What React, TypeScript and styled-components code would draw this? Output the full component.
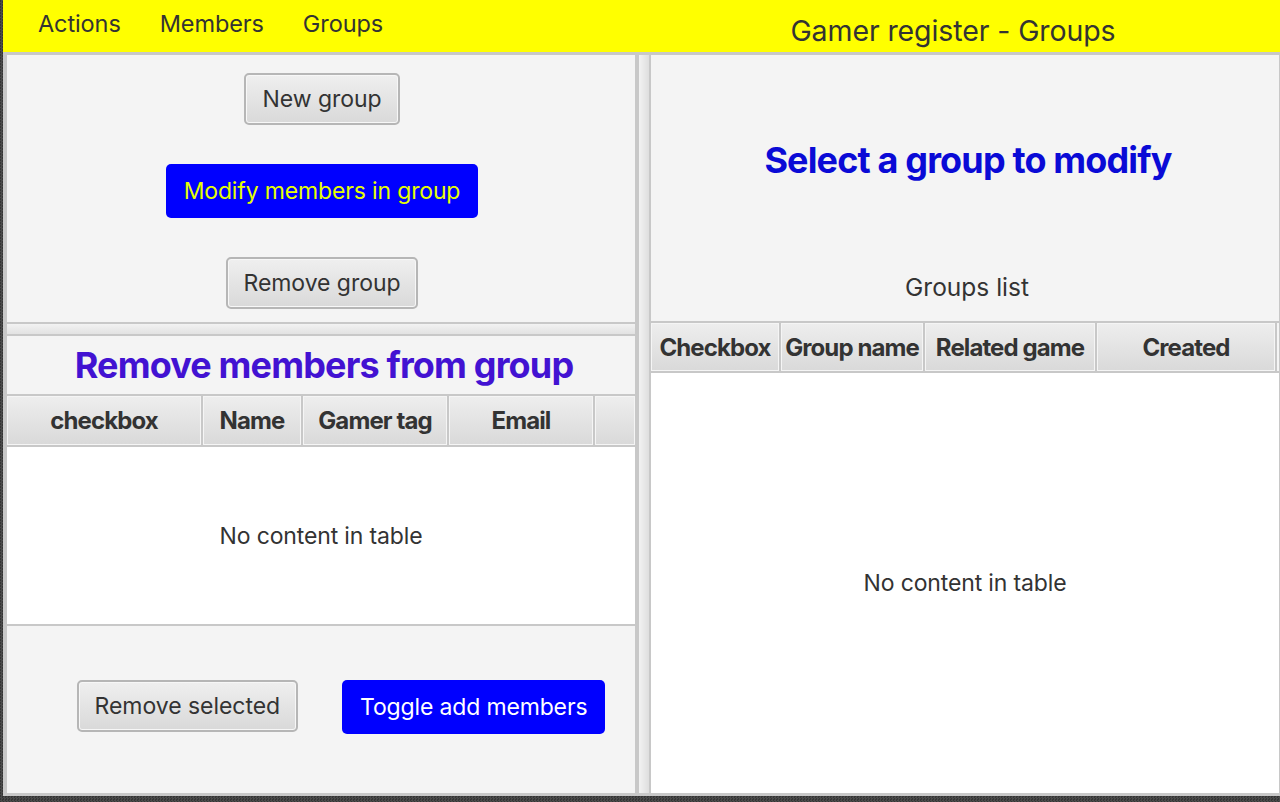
import React from "react";
import styled, { createGlobalStyle } from "styled-components";

const GlobalStyle = createGlobalStyle`
  html, body {
    margin: 0;
    padding: 0;
  }
  body {
    width: 1280px;
    height: 802px;
    overflow: hidden;
    background-color: #3d3d3d;
    background-image: repeating-conic-gradient(#4a4a4a 0 25%, #353535 0 50%);
    background-size: 3px 3px;
    font-family: Inter, "Noto Sans", "Liberation Sans", sans-serif;
    color: #333333;
  }
`;

const Window = styled.div`
  margin-left: 3px;
  width: 1277px;
  height: 796px;
  display: flex;
  flex-direction: column;
  background: #c8c8c8;
`;

const TopBar = styled.header`
  height: 52px;
  flex: 0 0 52px;
  background: #ffff00;
  display: flex;
`;

const MenuBar = styled.nav`
  width: 623px;
  display: flex;
  padding-left: 35px;
  box-sizing: border-box;
  gap: 39px;
`;

const MenuItem = styled.span`
  font-size: 23.5px;
  line-height: 28px;
  padding-top: 10px;
  letter-spacing: -0.1px;
  color: #333333;
`;

const WindowTitle = styled.h1`
  flex: 1;
  margin: 0;
  text-align: center;
  font-weight: 400;
  font-size: 28.5px;
  line-height: 34px;
  padding-top: 14px;
  letter-spacing: -0.1px;
  color: #333333;
`;

const SplitArea = styled.div`
  flex: 1;
  display: flex;
  padding: 3px 1px 3px 4px;
  min-height: 0;
`;

const Pane = styled.section`
  width: 628px;
  display: flex;
  flex-direction: column;
  background: #f4f4f4;
`;

const VDivider = styled.div`
  width: 10px;
  margin: 0 2px 0 4px;
  background: linear-gradient(to right, #f2f2f2, #dedede);
`;

const HDivider = styled.div`
  height: 10px;
  border-top: 2px solid #c8c8c8;
  border-bottom: 2px solid #c8c8c8;
  background: linear-gradient(to bottom, #f2f2f2, #e2e2e2);
`;

const ActionSection = styled.div`
  height: 267px;
  display: flex;
  flex-direction: column;
  align-items: center;
  padding: 18px 0 0 2px;
  gap: 39px;
  box-sizing: border-box;
`;

const GrayButton = styled.button`
  height: 52px;
  padding: 0 16px;
  border: 2px solid #b6b6b6;
  border-radius: 5px;
  background: linear-gradient(to bottom, #efefef, #d9d9d9);
  box-shadow: inset 0 0 0 1px #f7f7f7;
  font-family: inherit;
  font-size: 23px;
  letter-spacing: -0.05px;
  color: #333333;
  cursor: pointer;
`;

const BlueButton = styled.button<{ $text: string }>`
  height: 54px;
  padding: 0 18px;
  border: none;
  border-radius: 5px;
  background: #0000ff;
  font-family: inherit;
  font-size: 23px;
  letter-spacing: -0.15px;
  color: ${(p) => p.$text};
  cursor: pointer;
`;

const LowerSection = styled.div`
  flex: 1;
  display: flex;
  flex-direction: column;
`;

const SectionTitle = styled.h2<{ $color: string }>`
  margin: 0;
  font-size: 36px;
  font-weight: 700;
  letter-spacing: -0.85px;
  color: ${(p) => p.$color};
  text-align: center;
`;

const LeftTitleArea = styled.div`
  height: 58px;
  display: flex;
  align-items: center;
  justify-content: center;
  padding-left: 6px;
`;

const TableHeader = styled.div<{ $height: number }>`
  display: flex;
  height: ${(p) => p.$height}px;
  border-top: 2px solid #c8c8c8;
  border-bottom: 2px solid #c8c8c8;
`;

const HeaderCell = styled.div<{ $last?: boolean }>`
  box-sizing: border-box;
  display: flex;
  align-items: center;
  justify-content: center;
  overflow: hidden;
  white-space: nowrap;
  background: linear-gradient(to bottom, #eeeeee, #d9d9d9);
  box-shadow: inset 0 0 0 1px #f5f5f5;
  border-right: ${(p) => (p.$last ? "none" : "2px solid #c8c8c8")};
  font-size: 24px;
  font-weight: 700;
  letter-spacing: -0.9px;
  color: #333333;
`;

const TableBody = styled.div<{ $height?: number }>`
  background: #ffffff;
  display: flex;
  align-items: center;
  justify-content: center;
  font-size: 23px;
  letter-spacing: -0.15px;
  color: #333333;
  ${(p) => (p.$height ? `height: ${p.$height}px;` : "flex: 1;")}
`;

const BottomButtons = styled.div`
  flex: 1;
  border-top: 2px solid #c8c8c8;
  display: flex;
  justify-content: center;
  align-items: flex-start;
  padding: 54px 0 0 40px;
  gap: 44px;
`;

const RightTop = styled.div`
  height: 266px;
  display: flex;
  flex-direction: column;
`;

const RightTitleArea = styled.div`
  height: 210px;
  display: flex;
  align-items: center;
  justify-content: center;
  padding-left: 6px;
`;

const ListLabel = styled.div`
  text-align: center;
  font-size: 24.5px;
  line-height: 28px;
  padding: 8px 0 0 4px;
  letter-spacing: 0;
  color: #333333;
`;

type Col = { label: string; width: number };

const memberCols: Col[] = [
  { label: "checkbox", width: 196 },
  { label: "Name", width: 100 },
  { label: "Gamer tag", width: 146 },
  { label: "Email", width: 146 },
  { label: "", width: 40 },
];

const groupCols: Col[] = [
  { label: "Checkbox", width: 130 },
  { label: "Group name", width: 144 },
  { label: "Related game", width: 172 },
  { label: "Created", width: 180 },
  { label: "", width: 2 },
];

function Header({ cols, height }: { cols: Col[]; height: number }) {
  return (
    <TableHeader $height={height}>
      {cols.map((c, i) => (
        <HeaderCell key={i} $last={i === cols.length - 1} style={{ width: c.width }}>
          {c.label}
        </HeaderCell>
      ))}
    </TableHeader>
  );
}

export default function App() {
  return (
    <>
      <GlobalStyle />
      <Window>
        <TopBar>
          <MenuBar>
            <MenuItem>Actions</MenuItem>
            <MenuItem>Members</MenuItem>
            <MenuItem>Groups</MenuItem>
          </MenuBar>
          <WindowTitle>Gamer register - Groups</WindowTitle>
        </TopBar>
        <SplitArea>
          <Pane>
            <ActionSection>
              <GrayButton>New group</GrayButton>
              <BlueButton $text="#e6ff00">Modify members in group</BlueButton>
              <GrayButton>Remove group</GrayButton>
            </ActionSection>
            <HDivider />
            <LowerSection>
              <LeftTitleArea>
                <SectionTitle $color="#4212d2">Remove members from group</SectionTitle>
              </LeftTitleArea>
              <Header cols={memberCols} height={49} />
              <TableBody $height={177}>No content in table</TableBody>
              <BottomButtons>
                <GrayButton>Remove selected</GrayButton>
                <BlueButton $text="#ffffff">Toggle add members</BlueButton>
              </BottomButtons>
            </LowerSection>
          </Pane>
          <VDivider />
          <Pane>
            <RightTop>
              <RightTitleArea>
                <SectionTitle $color="#0a0ad6">Select a group to modify</SectionTitle>
              </RightTitleArea>
              <ListLabel>Groups list</ListLabel>
            </RightTop>
            <Header cols={groupCols} height={48} />
            <TableBody>No content in table</TableBody>
          </Pane>
        </SplitArea>
      </Window>
    </>
  );
}
